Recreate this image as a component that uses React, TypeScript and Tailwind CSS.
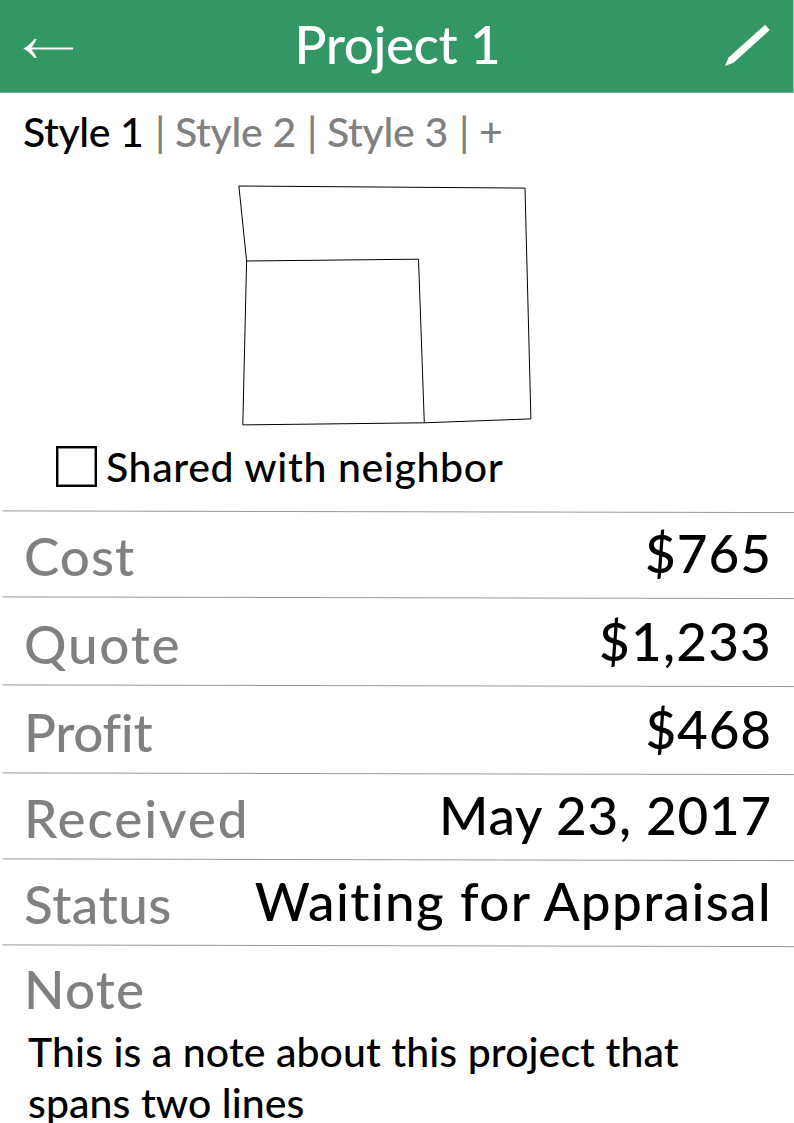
import type { ReactNode } from "react";

function Divider() {
  return (
    <svg className="block h-[4px] w-full shrink-0" viewBox="0 0 794 4">
      <line x1="2.5" y1="0.9" x2="794" y2="2.6" stroke="#979797" strokeWidth="1" />
    </svg>
  );
}

type RowProps = {
  className: string;
  label: ReactNode;
  value: ReactNode;
};

function Row({ className, label, value }: RowProps) {
  return (
    <div className={`flex shrink-0 flex-col ${className}`}>
      <Divider />
      <div className="flex items-start justify-between pl-[24px] pr-[22px] text-[53px] leading-[64px]">
        {label}
        {value}
      </div>
    </div>
  );
}

const labelClass = "text-[#808080] mt-[3px]";

export default function App() {
  return (
    <div className="flex h-[1123px] w-[794px] flex-col overflow-hidden bg-white font-['Lato',sans-serif] font-medium text-black [font-variant-ligatures:none] whitespace-nowrap">
      <header className="flex h-[93px] w-[794px] shrink-0 items-start justify-between border-r border-b border-r-[#99cbb2] border-b-[#70b593] bg-[#339765] text-white">
        <button className="pl-[22px] pt-[36px]" aria-label="Back">
          <svg className="block" width="54" height="24" viewBox="22 36 54 24">
            <path d="M31 48.4H73" stroke="white" strokeWidth="2" />
            <path d="M23.3 48.6C27.5 46.4 31.2 43 34.2 39.2L36.8 38.9C35.2 42 33.2 45.2 31.5 47.4V49.6C33.2 51.8 35.2 54.8 36.8 57.9L34.2 57.7C31.2 54 27.5 50.7 23.3 48.6Z" fill="white" />
          </svg>
        </button>
        <h1 className="pt-[12px] pr-[2px] text-[53px] leading-[64px] tracking-[-0.45px]">Project 1</h1>
        <button className="pt-[22px] pr-[20px]" aria-label="Edit">
          <svg className="block" width="52" height="46" viewBox="721 22 52 46">
            <path d="M765.2 24.8L769.7 30L733.8 62.6L725 66L728.6 57.4Z" fill="white" />
          </svg>
        </button>
      </header>

      <nav className="flex h-[80px] shrink-0 items-start pt-[14px] pl-[23px] text-[41px] leading-[50px] text-[#808080]">
        <span className="w-[132px] tracking-[-0.4px] text-black">Style 1</span>
        <span className="w-[20px]">|</span>
        <span className="w-[132px] tracking-[-0.3px]">Style 2</span>
        <span className="w-[20px]">|</span>
        <span className="w-[132px] tracking-[-0.3px]">Style 3</span>
        <span className="w-[20px]">|</span>
        <span>+</span>
      </nav>

      <svg className="block shrink-0" width="794" height="267" viewBox="0 173 794 267" fill="none" stroke="black" strokeWidth="1">
        <path d="M246.6 261L238.9 186L525 188.1L530.9 418.9L424.3 422.8L242.8 424.9L246.6 261L418.5 259.2L424.3 422.8" />
      </svg>

      <label className="flex h-[70px] shrink-0 items-start pl-[56px]">
        <span className="mt-[6px] block size-[41px] border-2 border-black shadow-[inset_0_0_0_1px_rgba(0,0,0,0.45)]" />
        <span className="mt-[2px] ml-[9px] text-[41px] leading-[50px] tracking-[0.63px]">Shared with neighbor</span>
      </label>

      <Row
        className="h-[86px]"
        label={<span className={`${labelClass} pt-[7px] tracking-[1px]`}>Cost</span>}
        value={<span className="pt-[7px] tracking-[1.03px]">$765</span>}
      />
      <Row
        className="h-[88px]"
        label={<span className={`${labelClass} pt-[9px] tracking-[1.75px]`}>Quote</span>}
        value={<span className="pt-[9px] tracking-[1.18px]">$1,233</span>}
      />
      <Row
        className="h-[88px]"
        label={<span className={`${labelClass} pt-[9px] tracking-[-0.35px]`}>Profit</span>}
        value={<span className="pt-[9px] tracking-[0.9px]">$468</span>}
      />
      <Row
        className="h-[86px]"
        label={<span className={`${labelClass} pt-[7px] tracking-[1.9px]`}>Received</span>}
        value={<span className="pt-[7px] tracking-[0.75px]">May 23, 2017</span>}
      />
      <Row
        className="h-[86px]"
        label={<span className={`${labelClass} pt-[7px] tracking-[0.5px]`}>Status</span>}
        value={<span className="pt-[7px] tracking-[1.38px]">Waiting for Appraisal</span>}
      />
      <section className="shrink-0">
        <Divider />
        <h2 className="pt-[9px] pl-[24px] text-[53px] leading-[64px] tracking-[1.2px] text-[#808080]">Note</h2>
        <p className="pt-[5px] pl-[28px] text-[41px] leading-[51px] tracking-[0.08px]">
          This is a note about this project that
          <br />
          spans two lines
        </p>
      </section>
    </div>
  );
}
